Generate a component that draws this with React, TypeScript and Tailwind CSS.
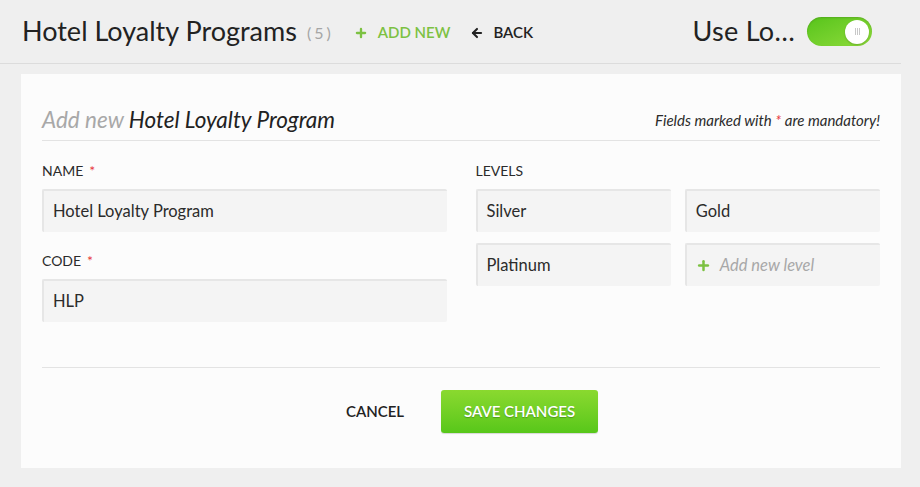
import { ArrowLeft, Plus } from "lucide-react";

const font = { fontFamily: "Lato, 'Noto Sans', sans-serif" };

function Field({ value, placeholder }: { value?: string; placeholder?: string }) {
  return (
    <div className="flex h-[43px] items-center rounded-[2px] border-t-2 border-l-2 border-[#e6e6e6] bg-[#f4f4f4] px-[9px] text-[16.5px] text-[#2b2b2b]">
      {value ? (
        value
      ) : (
        <span className="flex items-center gap-[9px] text-[16.5px] italic text-[#a8a8a8]">
          <Plus className="h-[15px] w-[15px] text-[#7cc142]" strokeWidth={4} />
          {placeholder}
        </span>
      )}
    </div>
  );
}

function Label({ text, required }: { text: string; required?: boolean }) {
  return (
    <div className="mb-[8px] text-[14px] uppercase text-[#2b2b2b]">
      {text}
      {required && <span className="ml-[6px] text-[#e8383d]">*</span>}
    </div>
  );
}

export default function App() {
  return (
    <div className="min-h-[487px] w-[920px] bg-[#efefef]" style={font}>
      <header className="mr-[19px] flex h-[64px] items-center border-b border-[#dcdcdc] pl-[22px]">
        <h1 className="text-[27px] text-[#222]">Hotel Loyalty Programs</h1>
        <span className="ml-[10px] mt-[2px] text-[16px] tracking-[3px] text-[#a5a5a5]">(5)</span>
        <button className="ml-[20px] mt-[2px] flex items-center gap-[10px] text-[15px] font-semibold uppercase text-[#7cc142]">
          <Plus className="h-[14px] w-[14px]" strokeWidth={4} />
          Add new
        </button>
        <button className="ml-[20px] mt-[2px] flex items-center gap-[9px] text-[15px] font-semibold uppercase text-[#222]">
          <ArrowLeft className="h-[14px] w-[14px]" strokeWidth={3.5} />
          Back
        </button>
        <div className="ml-auto mr-[29px] flex items-center gap-[12px]">
          <span className="text-[27px] tracking-[0.3px] text-[#222]">Use Lo…</span>
          <div className="flex h-[29px] w-[65px] items-center justify-end rounded-full bg-gradient-to-br from-[#56c41a] to-[#8ddb3a] pr-[3px] shadow-[inset_0_1px_2px_rgba(0,0,0,0.15)]">
            <div className="flex h-[24px] w-[24px] items-center justify-center gap-[1px] rounded-full bg-white shadow-[0_1px_2px_rgba(0,0,0,0.2)]">
              <span className="h-[7px] w-px bg-[#c8c8c8]" />
              <span className="h-[7px] w-px bg-[#c8c8c8]" />
              <span className="h-[7px] w-px bg-[#c8c8c8]" />
            </div>
          </div>
        </div>
      </header>

      <main className="ml-[21px] mr-[19px] mt-[10px] bg-[#fcfcfc] px-[21px] pt-[29px] pb-[35px]">
        <div className="flex items-end justify-between border-b border-[#e3e3e3] pb-[3px]">
          <h2 className="text-[22.5px] italic text-[#222]">
            <span className="text-[#a8a8a8]">Add new</span> Hotel Loyalty Program
          </h2>
          <p className="mb-[5px] text-[15px] italic text-[#2b2b2b]">
            Fields marked with <span className="text-[#e8383d]">*</span> are mandatory!
          </p>
        </div>

        <div className="mt-[19px] grid grid-cols-2 gap-x-[29px] border-b border-[#e3e3e3] pb-[45px]">
          <div className="flex flex-col">
            <Label text="Name" required />
            <Field value="Hotel Loyalty Program" />
            <div className="mt-[18px]">
              <Label text="Code" required />
              <Field value="HLP" />
            </div>
          </div>
          <div className="flex flex-col">
            <Label text="Levels" />
            <div className="grid grid-cols-2 gap-x-[14px] gap-y-[11px]">
              <Field value="Silver" />
              <Field value="Gold" />
              <Field value="Platinum" />
              <Field placeholder="Add new level" />
            </div>
          </div>
        </div>

        <div className="mt-[22px] flex items-center justify-center gap-[37px] pl-[22px]">
          <button className="text-[15px] font-semibold uppercase text-[#222]">Cancel</button>
          <button className="h-[43px] w-[157px] rounded-[3px] bg-gradient-to-b from-[#8ad92f] to-[#57c71a] text-[15px] font-semibold uppercase text-white shadow-[0_1px_1px_rgba(0,0,0,0.15)] [text-shadow:0_1px_1px_rgba(0,0,0,0.25)]">
            Save changes
          </button>
        </div>
      </main>
    </div>
  );
}
